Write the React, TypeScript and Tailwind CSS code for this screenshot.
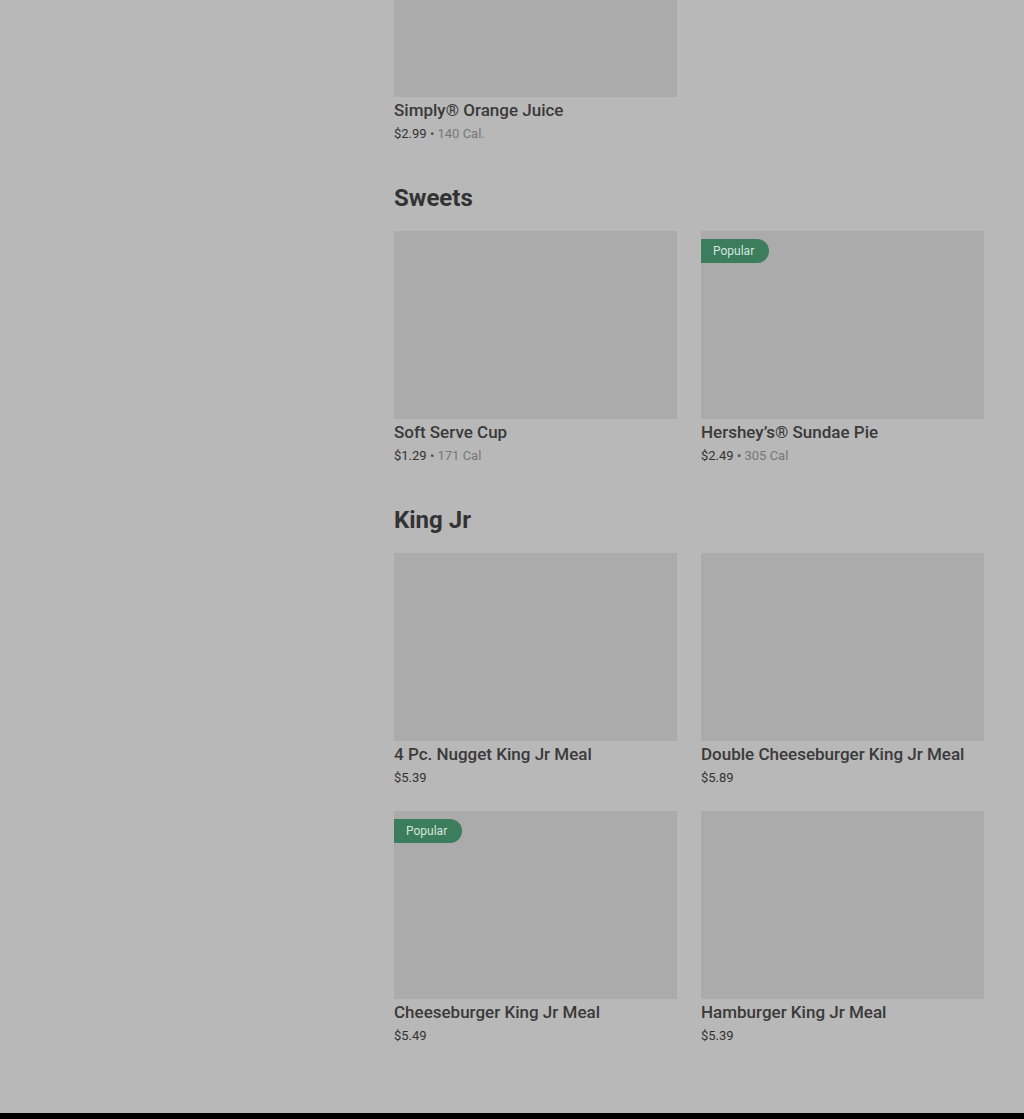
const sections = [
  {
    title: null as string | null,
    items: [{ name: 'Simply® Orange Juice', price: '$2.99', cal: '140 Cal.', popular: false }],
  },
  {
    title: 'Sweets',
    items: [
      { name: 'Soft Serve Cup', price: '$1.29', cal: '171 Cal', popular: false },
      { name: 'Hershey’s® Sundae Pie', price: '$2.49', cal: '305 Cal', popular: true },
    ],
  },
  {
    title: 'King Jr',
    items: [
      { name: '4 Pc. Nugget King Jr Meal', price: '$5.39', cal: null, popular: false },
      { name: 'Double Cheeseburger King Jr Meal', price: '$5.89', cal: null, popular: false },
      { name: 'Cheeseburger King Jr Meal', price: '$5.49', cal: null, popular: true },
      { name: 'Hamburger King Jr Meal', price: '$5.39', cal: null, popular: false },
    ],
  },
];

type Item = { name: string; price: string; cal: string | null; popular: boolean };

function ItemCard({ item }: { item: Item }) {
  return (
    <div className="flex flex-col">
      <div className="relative h-[188px] bg-[#ababab]">
        {item.popular && (
          <div className="absolute left-0 top-2 h-6 w-[68px] flex items-center pl-3 rounded-r-full bg-[#3b7d5c] text-[12px] text-[#d6e6dc]">
            Popular
          </div>
        )}
      </div>
      <div className="mt-[3px] text-[17px] leading-5 font-medium text-[#3a3a3a] whitespace-nowrap">
        {item.name}
      </div>
      <div className="mt-[5px] text-[13px] leading-[18px] text-[#333333]">
        {item.price}
        {item.cal && (
          <>
            <span className="text-[#555555]"> • </span>
            <span className="text-[#777777]">{item.cal}</span>
          </>
        )}
      </div>
    </div>
  );
}

export default function App() {
  return (
    <div className="min-h-screen bg-[#b8b8b8] overflow-hidden" style={{ fontFamily: 'Roboto, "Liberation Sans", sans-serif' }}>
      <div className="flex">
        {/* Sidebar */}
        <div className="w-[394px] shrink-0" />

        {/* Menu */}
        <div className="w-[590px] -mt-[91px] pb-[68px] flex flex-col gap-[39px]">
          {sections.map((section, i) => (
            <div key={i}>
              {section.title && (
                <h2 className="mb-[17px] text-[24px] leading-8 font-bold text-[#333333]">
                  {section.title}
                </h2>
              )}
              <div className="grid grid-cols-2 gap-x-6 gap-y-6">
                {section.items.map((item) => (
                  <ItemCard key={item.name} item={item} />
                ))}
              </div>
            </div>
          ))}
        </div>
      </div>

      {/* Footer */}
      <div className="h-[200px] bg-black" />
    </div>
  );
}
